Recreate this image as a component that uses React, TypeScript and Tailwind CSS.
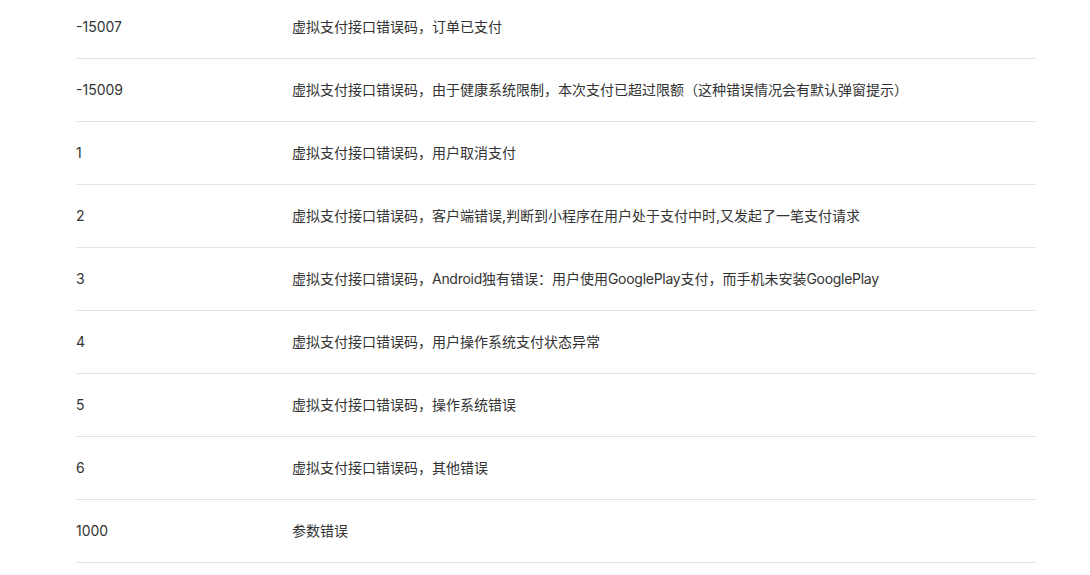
import React from "react";

const rows: [string, string][] = [
  ["-15007", "虚拟支付接口错误码，订单已支付"],
  ["-15009", "虚拟支付接口错误码，由于健康系统限制，本次支付已超过限额（这种错误情况会有默认弹窗提示）"],
  ["1", "虚拟支付接口错误码，用户取消支付"],
  ["2", "虚拟支付接口错误码，客户端错误,判断到小程序在用户处于支付中时,又发起了一笔支付请求"],
  ["3", "虚拟支付接口错误码，Android独有错误：用户使用GooglePlay支付，而手机未安装GooglePlay"],
  ["4", "虚拟支付接口错误码，用户操作系统支付状态异常"],
  ["5", "虚拟支付接口错误码，操作系统错误"],
  ["6", "虚拟支付接口错误码，其他错误"],
  ["1000", "参数错误"],
];

function Desc({ text }: { text: string }) {
  const parts = text.split(/([A-Za-z]+)/);
  return (
    <>
      {parts.map((p, i) =>
        /^[A-Za-z]+$/.test(p) ? (
          <span key={i} className="tracking-[-0.02em]">
            {p}
          </span>
        ) : (
          <span key={i}>{p}</span>
        )
      )}
    </>
  );
}

export default function App() {
  return (
    <div
      className="w-[1090px] h-[575px] overflow-hidden bg-white text-[14px] text-[#333333]"
      style={{ fontFamily: 'Inter, "Noto Sans CJK SC", sans-serif' }}
    >
      <div className="ml-[76px] w-[960px] -mt-[4px]">
        {rows.map(([code, desc]) => (
          <div key={code} className="flex items-center h-[63px] pb-[2px] border-b border-[#e3e3e3]">
            <div className="w-[216px] shrink-0">{code}</div>
            <div className="flex-1">
              <Desc text={desc} />
            </div>
          </div>
        ))}
      </div>
    </div>
  );
}
